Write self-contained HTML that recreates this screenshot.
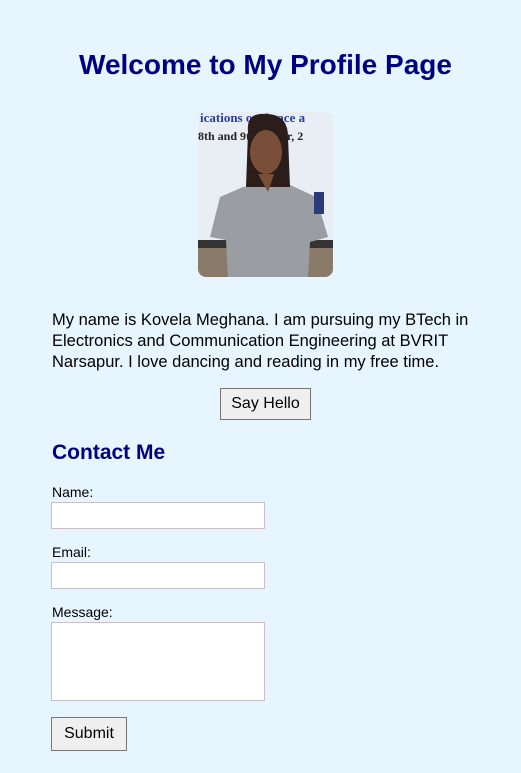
<!DOCTYPE html>
<html><head><style>
body{margin:0;width:521px;height:773px;background:#e6f5ff;font-family:"Liberation Sans",Arial,sans-serif;position:relative;overflow:hidden}
.a{position:absolute}
h1{position:absolute;left:0;width:531px;text-align:center;top:49px;margin:0;font-size:28px;color:#000080;font-weight:bold}
.photo{left:198px;top:112px;width:135px;height:165px;border-radius:8px;overflow:hidden;background:#dfe8f2}
p{position:absolute;left:52px;top:310px;width:440px;margin:0;font-size:16.5px;line-height:21px;color:#000}
.btn{position:absolute;background:#efefef;border:1px solid #767676;font-size:16px;display:flex;align-items:center;justify-content:center;box-sizing:border-box;color:#000}
h2{position:absolute;left:52px;top:441px;margin:0;font-size:21px;color:#000080}
label{position:absolute;left:52px;font-size:14px;color:#000}
.in{position:absolute;left:51px;width:214px;background:#fff;border:1px solid #c9c0c4;box-sizing:border-box}
</style></head><body>
<h1>Welcome to My Profile Page</h1>
<div class="a photo">
<svg width="135" height="165" viewBox="0 0 135 165" style="overflow:hidden;display:block">
<rect width="135" height="130" fill="#e9eef5"/>
<text x="2" y="10" font-size="13" font-weight="bold" fill="#2a3d9a" font-family="Liberation Serif">ications on Space a</text>
<text x="0" y="28" font-size="12" font-weight="bold" fill="#222" font-family="Liberation Serif">8th and 9th ember, 2</text>
<rect y="128" width="135" height="8" fill="#333"/>
<rect y="136" width="135" height="29" fill="#8a7a6a"/>
<path d="M45 75 L90 72 L118 85 L130 125 L112 130 L110 165 L30 165 L28 128 L12 125 L22 85 Z" fill="#9a9ea3"/>
<path d="M50 20 Q48 0 68 2 Q90 2 90 25 L92 75 L48 75 Z" fill="#2a1d1a"/>
<ellipse cx="68" cy="40" rx="16" ry="22" fill="#7a4f3a"/>
<path d="M60 62 L76 62 L70 80 Z" fill="#7a4f3a"/>
<rect x="116" y="80" width="10" height="22" fill="#2a3a7a"/>
</svg></div>
<p>My name is Kovela Meghana. I am pursuing my BTech in Electronics and Communication Engineering at BVRIT Narsapur. I love dancing and reading in my free time.</p>
<div class="btn" style="left:220px;top:388px;width:91px;height:32px">Say Hello</div>
<h2>Contact Me</h2>
<label style="top:484px">Name:</label>
<div class="in" style="top:502px;height:27px"></div>
<label style="top:544px">Email:</label>
<div class="in" style="top:562px;height:27px"></div>
<label style="top:604px">Message:</label>
<div class="in" style="top:622px;height:79px"></div>
<div class="btn" style="left:51px;top:717px;width:76px;height:34px">Submit</div>
</body></html>
